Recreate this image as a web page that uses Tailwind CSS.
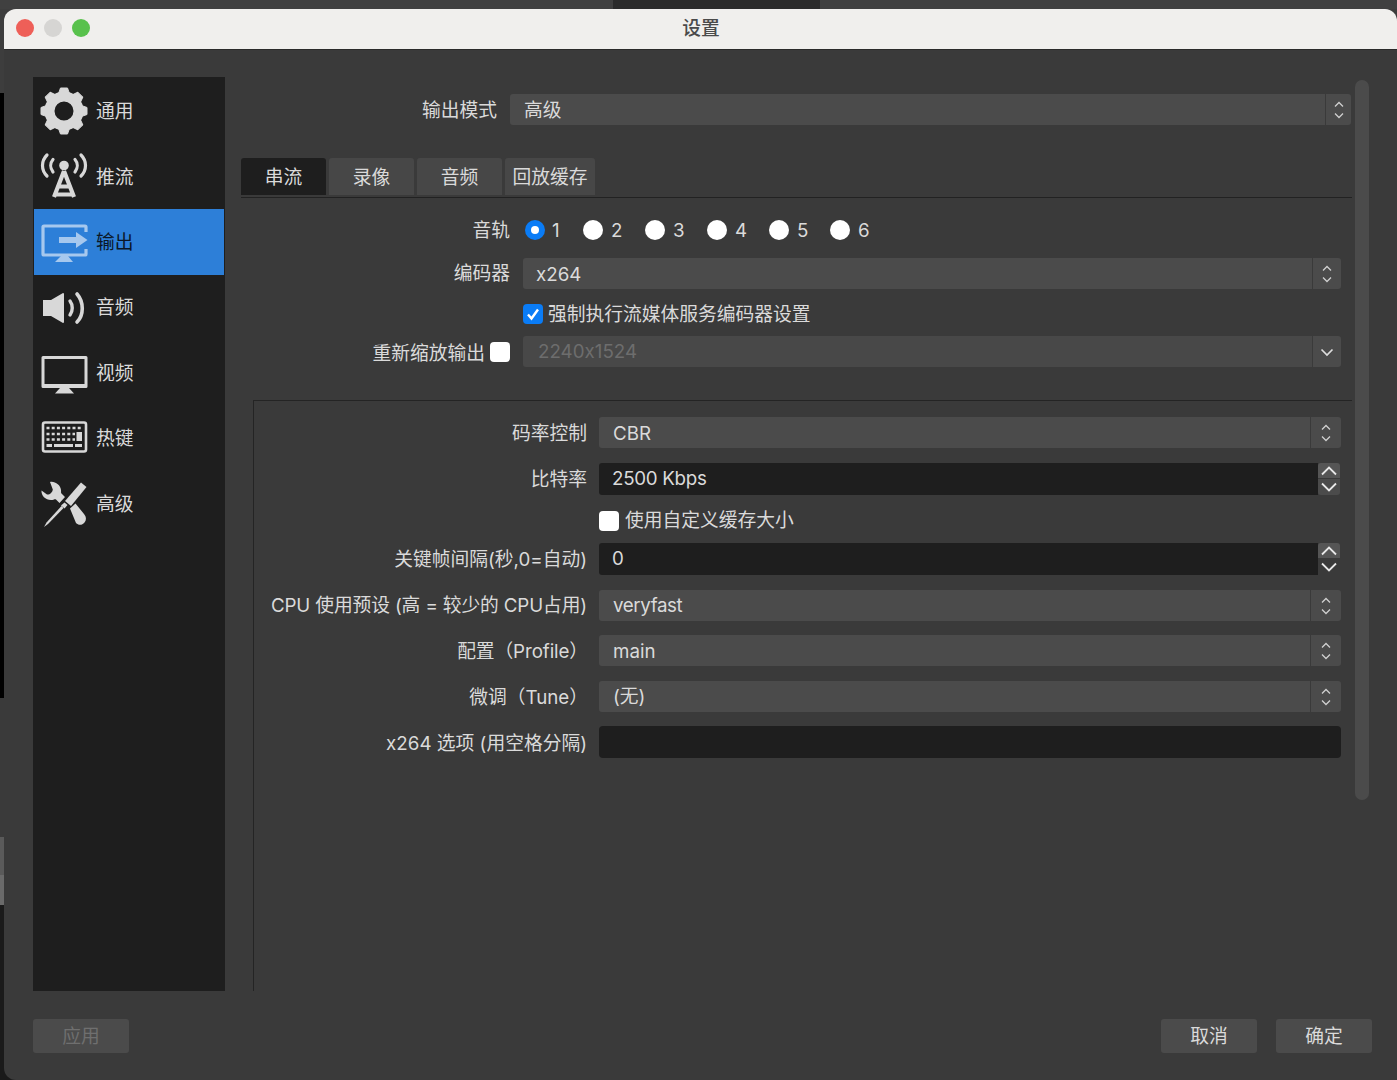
<!doctype html>
<html lang="zh-CN">
  <head>
    <title>设置</title>
    <meta charset="UTF-8" />
    <script src="https://cdn.jsdelivr.net/npm/@tailwindcss/browser@4"></script>
  </head>
  <body class="bg-[#3d3d3d] h-[1080px] overflow-hidden font-['Inter','Noto_Sans_CJK_SC',sans-serif] [font-feature-settings:'calt'_0] text-[18.75px] leading-[20px] text-[#dadada]">
    <!-- Desktop behind the window -->
    <div class="flex h-[9px]">
      <div class="w-[613px] bg-[#404040]"></div>
      <div class="w-[207px] bg-[#2b2b2b]"></div>
      <div class="flex-1 bg-[#404040]"></div>
    </div>
    <div class="flex h-[1071px] bg-[linear-gradient(to_bottom,#3d3d3d_50%,#1a1a1a_50%)]">
      <div class="w-[4px] flex flex-col">
        <div class="h-[84px] bg-[#3d3d3d]"></div>
        <div class="h-[605px] bg-black"></div>
        <div class="h-[139px] bg-[#3a3a3a]"></div>
        <div class="h-[38px] bg-[#5a5a5a]"></div>
        <div class="h-[30px] bg-[#6a6a6a]"></div>
        <div class="flex-1 bg-[#1a1a1a]"></div>
      </div>
      <!-- Window -->
      <div class="flex-1 flex flex-col rounded-t-xl rounded-bl-xl overflow-hidden bg-[#3a3a3a]">
        <!-- Title bar -->
        <div class="relative h-[41px] pb-px bg-[#f0efed] border-b border-[#2a2a2a] flex items-center justify-center text-[#4a4a4a]">
          <div class="absolute left-[12px] top-[10px] flex gap-[10px]">
            <span class="w-[18px] h-[18px] rounded-full bg-[#ee5f58]"></span>
            <span class="w-[18px] h-[18px] rounded-full bg-[#d6d5d3]"></span>
            <span class="w-[18px] h-[18px] rounded-full bg-[#58c14c]"></span>
          </div>
          <span class="font-medium ml-px">设置</span>
        </div>

        <div class="flex pl-[29px] pt-[27px]">
          <!-- Sidebar -->
          <div class="w-[192px] h-[914px] bg-[#1e1e1e] pt-px">
            <div class="h-[65.5px] flex items-center pl-[7px] gap-[8px]">
              <svg class="w-12 h-12 text-[#d8d8d8]" viewBox="0 0 48 48" fill="currentColor">
                <circle cx="24" cy="24" r="14.5" fill="none" stroke="currentColor" stroke-width="10" />
                <path d="M20.5 1 H27.5 L30 8 H18 Z" stroke="currentColor" stroke-width="1" stroke-linejoin="round" />
                <path d="M20.5 1 H27.5 L30 8 H18 Z" stroke="currentColor" stroke-width="1" stroke-linejoin="round" transform="rotate(45 24 24)" />
                <path d="M20.5 1 H27.5 L30 8 H18 Z" stroke="currentColor" stroke-width="1" stroke-linejoin="round" transform="rotate(90 24 24)" />
                <path d="M20.5 1 H27.5 L30 8 H18 Z" stroke="currentColor" stroke-width="1" stroke-linejoin="round" transform="rotate(135 24 24)" />
                <path d="M20.5 1 H27.5 L30 8 H18 Z" stroke="currentColor" stroke-width="1" stroke-linejoin="round" transform="rotate(180 24 24)" />
                <path d="M20.5 1 H27.5 L30 8 H18 Z" stroke="currentColor" stroke-width="1" stroke-linejoin="round" transform="rotate(225 24 24)" />
                <path d="M20.5 1 H27.5 L30 8 H18 Z" stroke="currentColor" stroke-width="1" stroke-linejoin="round" transform="rotate(270 24 24)" />
                <path d="M20.5 1 H27.5 L30 8 H18 Z" stroke="currentColor" stroke-width="1" stroke-linejoin="round" transform="rotate(315 24 24)" />
              </svg>
              <span class="pt-[2px]">通用</span>
            </div>
            <div class="h-[65.5px] flex items-center pl-[7px] gap-[8px]">
              <svg class="w-12 h-12 text-[#d8d8d8]" viewBox="0 0 48 48" fill="none" stroke="currentColor">
                <circle cx="24" cy="13.5" r="4.8" fill="currentColor" stroke="none" />
                <path d="M7 3 C1 9 1 18 7 24 M41 3 C47 9 47 18 41 24" stroke-width="3.2" stroke-linecap="round" />
                <path d="M13 7.5 C10 11 10 16 13 20 M35 7.5 C38 11 38 16 35 20" stroke-width="3.2" stroke-linecap="round" />
                <path d="M24 19 L14 45 M24 19 L34 45 M18 34.5 H30 M15 42.5 H33" stroke-width="4.2" />
              </svg>
              <span class="pt-[3px]">推流</span>
            </div>
            <div class="h-[65.5px] mx-px flex items-center pl-[6px] gap-[8px] bg-[#2d7fd8] text-[#0b1726]">
              <svg class="w-12 h-12 text-[#a6c8ee]" viewBox="0 0 48 48" fill="currentColor">
                <path d="M46 14 V9 a1 1 0 0 0 -1 -1 H4 a1 1 0 0 0 -1 1 V36 a1 1 0 0 0 1 1 H45 a1 1 0 0 0 1 -1 V31" fill="none" stroke="currentColor" stroke-width="3.2" />
                <path d="M19 19 H36 V14 L47.5 22 L36 30 V25 H19 Z" />
                <path d="M21 38 H28 L33 44 H15 Z" />
              </svg>
              <span class="pt-[2px]">输出</span>
            </div>
            <div class="h-[65.5px] flex items-center pl-[7px] gap-[8px]">
              <svg class="w-12 h-12 text-[#d8d8d8]" viewBox="0 0 48 48" fill="currentColor">
                <path d="M3 17 H11 L23 10 a1 1 0 0 1 1 1 V39 a1 1 0 0 1 -1 1 L11 33 H3 Z" />
                <path d="M30 18 C33 22 33 28 30 32" fill="none" stroke="currentColor" stroke-width="3.4" stroke-linecap="round" />
                <path d="M37 11 C44 19 44 32 37 39" fill="none" stroke="currentColor" stroke-width="3.6" stroke-linecap="round" />
              </svg>
              <span class="pt-[2px]">音频</span>
            </div>
            <div class="h-[65.5px] flex items-center pl-[7px] gap-[8px]">
              <svg class="w-12 h-12 text-[#d8d8d8]" viewBox="0 0 48 48" fill="currentColor">
                <path fill-rule="evenodd" d="M3 7 H46 a1.5 1.5 0 0 1 1.5 1.5 V37.5 a1.5 1.5 0 0 1 -1.5 1.5 H3 a1.5 1.5 0 0 1 -1.5 -1.5 V8.5 a1.5 1.5 0 0 1 1.5 -1.5 Z M4.5 10 V35 H44.5 V10 Z" />
                <path d="M20 39 H29 L34 44.5 H15 Z" />
              </svg>
              <span class="pt-[2px]">视频</span>
            </div>
            <div class="h-[65.5px] flex items-center pl-[7px] gap-[8px]">
              <svg class="w-12 h-12 text-[#d8d8d8]" viewBox="0 0 48 48" fill="currentColor">
                <rect x="3" y="8.5" width="43" height="29" rx="2" fill="none" stroke="currentColor" stroke-width="2.6" />
                <path d="M6.5 14 H42" stroke="currentColor" stroke-width="2.6" stroke-dasharray="3 2.2" />
                <path d="M6.5 20 H35" stroke="currentColor" stroke-width="2.6" stroke-dasharray="3 2.2" />
                <path d="M6.5 25.5 H35" stroke="currentColor" stroke-width="2.6" stroke-dasharray="3 2.2" />
                <rect x="36.5" y="18" width="5.5" height="9" />
                <rect x="6.5" y="30" width="5.5" height="3" />
                <rect x="14" y="30" width="19" height="3" />
                <rect x="35" y="30" width="7" height="3" />
              </svg>
              <span class="pt-[2px]">热键</span>
            </div>
            <div class="h-[65.5px] flex items-center pl-[7px] gap-[8px]">
              <svg class="w-12 h-12 text-[#d8d8d8]" viewBox="0 0 48 48" fill="currentColor">
                <path d="M41 2.5 L46.5 7 L31 26 L25 21 Z" />
                <path d="M24.5 22.5 L27.5 25 L24.5 28.5 L21 25.5 Z" />
                <path d="M21.5 26 L23.5 28 L8 44 L4 47 L6.5 42.5 Z" />
                <path d="M30 28.5 L35.5 23.5 L44 34 C46.5 37 46.5 40 44.5 42.5 C42 45.5 38.5 45.5 36 43 Z" />
                <path d="M10 2 C15 1 20.5 5 21 10 C21.2 12 20.8 12.8 21.5 13.5 L25 17 L19.5 23 L16 19.5 C15 18.7 13.5 20 11 20 C5.5 20 1 15.5 1.5 10.5 L7 14.5 C9.5 15 12.5 12.5 12.8 9.5 Z" />
              </svg>
              <span class="pt-[2px]">高级</span>
            </div>
          </div>

          <!-- Main panel -->
          <div class="w-[1111px] ml-[16px] h-[914px] flex flex-col">
            <div class="flex items-center mt-[17px]">
              <span class="w-[256px] text-right pt-[2px]">输出模式</span>
              <div class="ml-[13px] w-[841px] h-[31px] flex rounded-[3px] overflow-hidden">
                <div class="flex-1 bg-[#4b4b4b] flex items-center pl-[14px] pt-[2px]">高级</div>
                <div class="w-[25px] ml-px bg-[#4b4b4b] flex items-center justify-center">
                  <svg class="w-[10px] h-[20px]" viewBox="0 0 10 20" fill="none" stroke="#d0d0d0" stroke-width="1.3"><path d="M1 6.5 L5 2.5 L9 6.5 M1 13.5 L5 17.5 L9 13.5" /></svg>
                </div>
              </div>
            </div>

            <!-- Tabs -->
            <div class="mt-[33px] h-[40px] border-b border-[#222222] flex gap-[3px] items-start">
              <div class="w-[85px] h-[37px] pt-[2px] rounded-t-[3px] bg-[#1e1e1e] flex items-center justify-center">串流</div>
              <div class="w-[85px] h-[37px] pt-[2px] rounded-t-[3px] bg-[#474747] flex items-center justify-center">录像</div>
              <div class="w-[85px] h-[37px] pt-[2px] rounded-t-[3px] bg-[#474747] flex items-center justify-center">音频</div>
              <div class="w-[90px] h-[37px] pt-[2px] rounded-t-[3px] bg-[#474747] flex items-center justify-center">回放缓存</div>
            </div>

            <!-- Audio track -->
            <div class="mt-[21px] h-[22px] flex items-center">
              <span class="w-[269px] text-right pt-[2px]">音轨</span>
              <div class="ml-[15px] flex">
                <div class="w-[58px] flex items-center gap-[7px]">
                  <span class="w-[20px] h-[20px] rounded-full bg-[#0a7cf6] flex items-center justify-center"><span class="w-[8px] h-[8px] rounded-full bg-white"></span></span><span class="pt-[2px]">1</span>
                </div>
                <div class="w-[62px] flex items-center gap-[8px]"><span class="w-[20px] h-[20px] rounded-full bg-white"></span><span class="pt-[2px]">2</span></div>
                <div class="w-[62px] flex items-center gap-[8px]"><span class="w-[20px] h-[20px] rounded-full bg-white"></span><span class="pt-[2px]">3</span></div>
                <div class="w-[62px] flex items-center gap-[8px]"><span class="w-[20px] h-[20px] rounded-full bg-white"></span><span class="pt-[2px]">4</span></div>
                <div class="w-[61px] flex items-center gap-[8px]"><span class="w-[20px] h-[20px] rounded-full bg-white"></span><span class="pt-[2px]">5</span></div>
                <div class="w-[62px] flex items-center gap-[8px]"><span class="w-[20px] h-[20px] rounded-full bg-white"></span><span class="pt-[2px]">6</span></div>
              </div>
            </div>

            <!-- Encoder -->
            <div class="mt-[17px] flex items-center">
              <span class="w-[269px] text-right">编码器</span>
              <div class="ml-[13px] w-[818px] h-[31px] flex rounded-[3px] overflow-hidden">
                <div class="flex-1 bg-[#4b4b4b] flex items-center pl-[13px] pt-[2px]">x264</div>
                <div class="w-[28px] ml-px bg-[#4b4b4b] flex items-center justify-center">
                  <svg class="w-[10px] h-[20px]" viewBox="0 0 10 20" fill="none" stroke="#d0d0d0" stroke-width="1.3"><path d="M1 6.5 L5 2.5 L9 6.5 M1 13.5 L5 17.5 L9 13.5" /></svg>
                </div>
              </div>
            </div>
            <div class="mt-[15px] h-[20px] flex items-center pl-[282px] gap-[5px]">
              <span class="w-[20px] h-[20px] rounded-[4px] bg-[#0a7cf6] flex items-center justify-center">
                <svg class="w-[14px] h-[14px]" viewBox="0 0 14 14" fill="none" stroke="white" stroke-width="2.4"><path d="M2 7.5 L5.5 11.5 L12 2.5" /></svg>
              </span>
              <span class="pt-[2px]">强制执行流媒体服务编码器设置</span>
            </div>
            <div class="mt-[12px] flex items-center">
              <span class="w-[244px] text-right pt-[5px]">重新缩放输出</span>
              <span class="ml-[5px] w-[20px] h-[20px] rounded-[4px] bg-white"></span>
              <div class="ml-[13px] w-[818px] h-[31px] flex rounded-[3px] overflow-hidden">
                <div class="flex-1 bg-[#484848] flex items-center pl-[15px] text-[#6d6d6d]">2240x1524</div>
                <div class="w-[28px] ml-px bg-[#4b4b4b] flex items-center justify-center">
                  <svg class="w-[14px] h-[10px]" viewBox="0 0 14 10" fill="none" stroke="#dddddd" stroke-width="1.7"><path d="M1.5 2.5 L7 8 L12.5 2.5" /></svg>
                </div>
              </div>
            </div>

            <!-- Streaming settings group -->
            <div class="mt-[33px] ml-[12px] w-[1099px] flex-1 border-l border-t border-[#242424] pt-[16px]">
              <div class="flex items-center">
                <span class="w-[333px] text-right pt-[2px]">码率控制</span>
                <div class="ml-[12px] w-[742px] h-[31px] flex rounded-[3px] overflow-hidden">
                  <div class="flex-1 bg-[#4b4b4b] flex items-center pl-[14px] pt-[2px]">CBR</div>
                  <div class="w-[30px] ml-px bg-[#4b4b4b] flex items-center justify-center">
                    <svg class="w-[10px] h-[20px]" viewBox="0 0 10 20" fill="none" stroke="#d0d0d0" stroke-width="1.3"><path d="M1 6.5 L5 2.5 L9 6.5 M1 13.5 L5 17.5 L9 13.5" /></svg>
                  </div>
                </div>
              </div>
              <div class="mt-[15px] flex items-center">
                <span class="w-[333px] text-right pt-[2px]">比特率</span>
                <div class="ml-[12px] w-[719px] h-[32px] rounded-l-[3px] bg-[#1e1e1e] flex items-center pl-[13px] tracking-[-0.3px]">2500 Kbps</div>
                <div class="w-[22px] h-[32px] flex flex-col gap-px">
                  <div class="h-[15px] rounded-t-[3px] bg-[#555555] flex items-center justify-center">
                    <svg class="w-[16px] h-[10px]" viewBox="0 0 16 10" fill="none" stroke="#e8e8e8" stroke-width="1.8"><path d="M1 8.5 L8 1.5 L15 8.5" /></svg>
                  </div>
                  <div class="h-[16px] rounded-b-[3px] bg-[#4b4b4b] flex items-center justify-center">
                    <svg class="w-[16px] h-[10px]" viewBox="0 0 16 10" fill="none" stroke="#e8e8e8" stroke-width="1.8"><path d="M1 1.5 L8 8.5 L15 1.5" /></svg>
                  </div>
                </div>
              </div>
              <div class="mt-[16px] h-[20px] flex items-center pl-[345px] gap-[6px]">
                <span class="w-[20px] h-[20px] rounded-[4px] bg-white"></span>
                <span>使用自定义缓存大小</span>
              </div>
              <div class="mt-[12px] flex items-center">
                <span class="w-[333px] text-right pt-[2px]">关键帧间隔(秒,0=自动)</span>
                <div class="ml-[12px] w-[719px] h-[32px] rounded-l-[3px] bg-[#1e1e1e] flex items-center pl-[13px]">0</div>
                <div class="w-[22px] h-[32px] flex flex-col gap-px">
                  <div class="h-[15px] rounded-t-[3px] bg-[#555555] flex items-center justify-center">
                    <svg class="w-[16px] h-[10px]" viewBox="0 0 16 10" fill="none" stroke="#e8e8e8" stroke-width="1.8"><path d="M1 8.5 L8 1.5 L15 8.5" /></svg>
                  </div>
                  <div class="h-[16px] flex items-center justify-center">
                    <svg class="w-[16px] h-[10px]" viewBox="0 0 16 10" fill="none" stroke="#e8e8e8" stroke-width="1.8"><path d="M1 1.5 L8 8.5 L15 1.5" /></svg>
                  </div>
                </div>
              </div>
              <div class="mt-[15px] flex items-center">
                <span class="w-[333px] text-right tracking-[-0.13px]">CPU 使用预设 (高 = 较少的 CPU占用)</span>
                <div class="ml-[12px] w-[742px] h-[31px] flex rounded-[3px] overflow-hidden">
                  <div class="flex-1 bg-[#4b4b4b] flex items-center pl-[14px] tracking-[-0.4px]">veryfast</div>
                  <div class="w-[30px] ml-px bg-[#4b4b4b] flex items-center justify-center">
                    <svg class="w-[10px] h-[20px]" viewBox="0 0 10 20" fill="none" stroke="#d0d0d0" stroke-width="1.3"><path d="M1 6.5 L5 2.5 L9 6.5 M1 13.5 L5 17.5 L9 13.5" /></svg>
                  </div>
                </div>
              </div>
              <div class="mt-[14px] flex items-center">
                <span class="w-[334px] text-right pt-[2px] tracking-[-0.1px]">配置（Profile）</span>
                <div class="ml-[11px] w-[742px] h-[31px] flex rounded-[3px] overflow-hidden">
                  <div class="flex-1 bg-[#4b4b4b] flex items-center pl-[14px] pt-[2px]">main</div>
                  <div class="w-[30px] ml-px bg-[#4b4b4b] flex items-center justify-center">
                    <svg class="w-[10px] h-[20px]" viewBox="0 0 10 20" fill="none" stroke="#d0d0d0" stroke-width="1.3"><path d="M1 6.5 L5 2.5 L9 6.5 M1 13.5 L5 17.5 L9 13.5" /></svg>
                  </div>
                </div>
              </div>
              <div class="mt-[15px] flex items-center">
                <span class="w-[334px] text-right pt-[2px]">微调（Tune）</span>
                <div class="ml-[11px] w-[742px] h-[31px] flex rounded-[3px] overflow-hidden">
                  <div class="flex-1 bg-[#4b4b4b] flex items-center pl-[14px]">(无)</div>
                  <div class="w-[30px] ml-px bg-[#4b4b4b] flex items-center justify-center">
                    <svg class="w-[10px] h-[20px]" viewBox="0 0 10 20" fill="none" stroke="#d0d0d0" stroke-width="1.3"><path d="M1 6.5 L5 2.5 L9 6.5 M1 13.5 L5 17.5 L9 13.5" /></svg>
                  </div>
                </div>
              </div>
              <div class="mt-[14px] flex items-center">
                <span class="w-[333px] text-right pt-[4px]">x264 选项 (用空格分隔)</span>
                <div class="ml-[12px] w-[742px] h-[32px] rounded-[4px] bg-[#1e1e1e]"></div>
              </div>
            </div>
          </div>

          <!-- Scroll bar -->
          <div class="ml-[3px] mt-[3px] w-[14px] h-[720px] rounded-full bg-[#4b4b4b]"></div>
        </div>

        <!-- Footer buttons -->
        <div class="mt-[28px] pl-[29px] pr-[25px] flex justify-between">
          <div class="w-[96px] h-[34px] pt-[2px] rounded-[3px] bg-[#4b4b4b] flex items-center justify-center text-[#6f6f6f]">应用</div>
          <div class="flex gap-[19px]">
            <div class="w-[96px] h-[34px] pt-[2px] rounded-[3px] bg-[#4b4b4b] flex items-center justify-center">取消</div>
            <div class="w-[96px] h-[34px] pt-[2px] rounded-[3px] bg-[#4b4b4b] flex items-center justify-center">确定</div>
          </div>
        </div>
      </div>
    </div>
  </body>
</html>
